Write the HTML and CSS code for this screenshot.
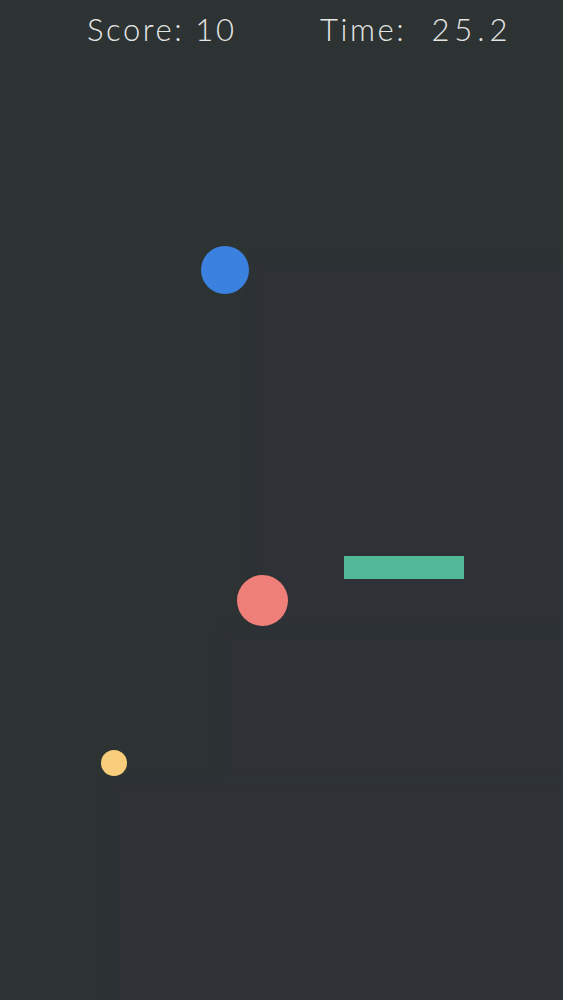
FILE: index.html
```html
<!DOCTYPE html>
<html>
<head>
<meta charset="utf-8">
<link rel="stylesheet" href="styles.css">
</head>
<body>
<div class="game">
  <div class="trail trail-a"></div>
  <div class="trail trail-b"></div>
  <div class="trail trail-c"></div>
  <header class="hud">
    <span class="score">Score: 10</span>
    <span class="time"><span class="time-label">Time:</span><span class="time-value">25.2</span></span>
  </header>
  <div class="ball ball-blue"></div>
  <div class="ball ball-red"></div>
  <div class="ball ball-yellow"></div>
  <div class="paddle"></div>
</div>
</body>
</html>
```
FILE: styles.css
```css
html, body {
  margin: 0;
  padding: 0;
  background: #2d3232;
}
.game {
  position: relative;
  width: 563px;
  height: 1000px;
  overflow: hidden;
  background: #2d3232;
}
.trail {
  position: absolute;
  right: 0;
  bottom: 0;
  background: #2e3237;
  filter: blur(3px);
}
.trail-a { left: 250px; top: 262px; right: -10px; bottom: -10px; }
.trail-b { left: 222px; top: 630px; right: -10px; bottom: -10px; }
.trail-c { left: 110px; top: 778px; right: -10px; bottom: -10px; }
.hud {
  position: relative;
  display: flex;
  align-items: center;
  padding: 10px 0 0 87px;
  height: 38px;
  font-family: Lato, "Liberation Sans", sans-serif;
  font-weight: 300;
  font-size: 31px;
  color: #e4e6e6;
  letter-spacing: 2.6px;
}
.score { width: 233px; }
.time { display: flex; }
.time-value { margin-left: 25px; letter-spacing: 5px; }
.ball {
  position: absolute;
  border-radius: 50%;
}
.ball-blue {
  left: 201px; top: 246px; width: 48px; height: 48px;
  background: #3b82e0;
}
.ball-red {
  left: 237px; top: 575px; width: 51px; height: 51px;
  background: #ef7f79;
}
.ball-yellow {
  left: 101px; top: 750px; width: 26px; height: 26px;
  background: #f8cd7b;
}
.paddle {
  position: absolute;
  left: 344px; top: 556px; width: 120px; height: 23px;
  background: #52b898;
}
```
